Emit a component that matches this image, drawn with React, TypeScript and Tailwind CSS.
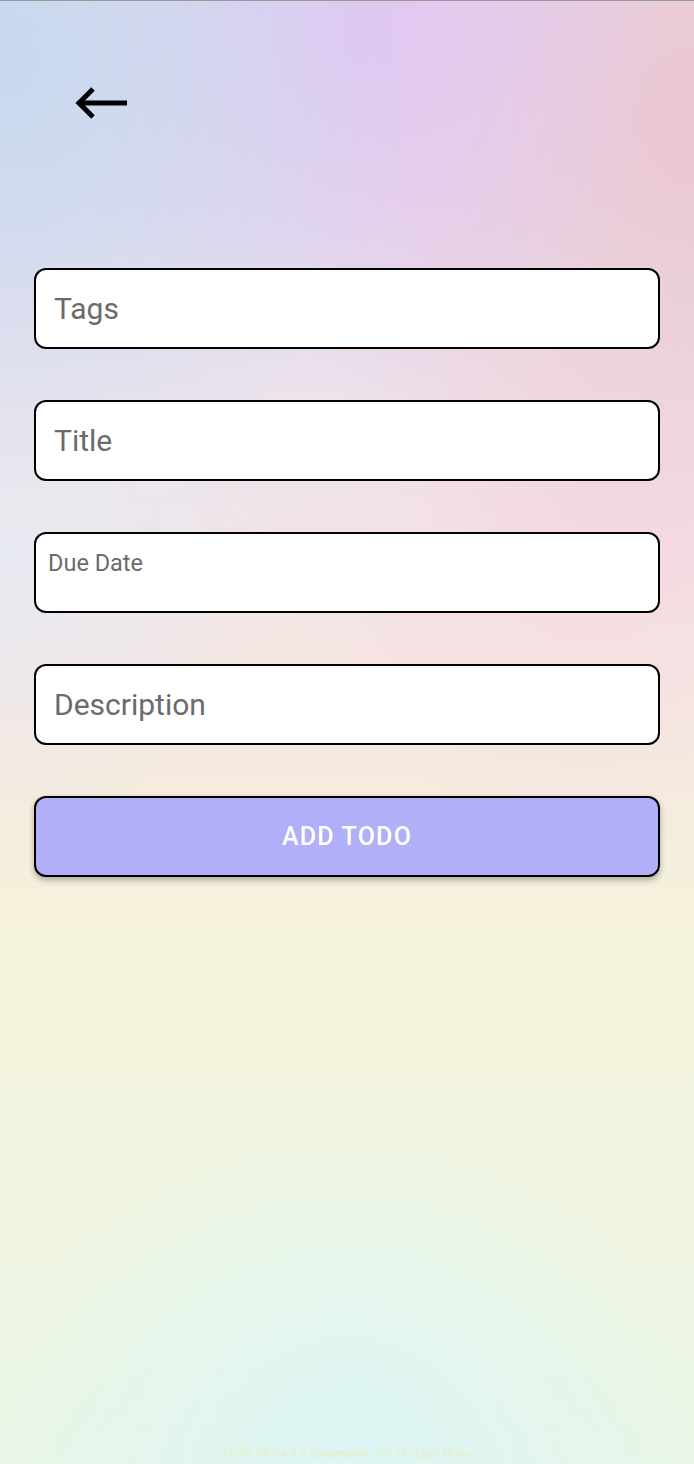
import React from "react";

const fields = ["Tags", "Title"];

function BackArrow() {
  return (
    <svg width="54" height="34" viewBox="0 0 54 34" fill="none" stroke="black" strokeWidth="5">
      <path d="M4 17 H53" />
      <path d="M19 3 L5 17 L19 31" strokeLinejoin="miter" />
    </svg>
  );
}

const App = () => {
  return (
    <div
      className="relative flex min-h-screen h-[1464px] w-full flex-col border-t border-[#9a9a9a] font-['Roboto',_'Noto_Sans',_sans-serif] bg-[radial-gradient(ellipse_60%_30%_at_0%_4%,#c6d8ef_0%,transparent_100%),radial-gradient(ellipse_45%_25%_at_52%_2%,#e1c6f2_0%,transparent_100%),radial-gradient(ellipse_60%_35%_at_100%_8%,#ebc6d0_0%,transparent_100%),radial-gradient(ellipse_45%_18%_at_85%_38%,#f5dce2_0%,transparent_100%),radial-gradient(ellipse_40%_18%_at_0%_38%,#e7e9f1_0%,transparent_100%),radial-gradient(ellipse_50%_25%_at_50%_100%,#ddf6f6_0%,transparent_100%),linear-gradient(to_bottom,#e2dcef_0%,#ede3ec_30%,#f5e6e2_45%,#f5f1dc_62%,#f1f4df_80%,#e8f5e6_100%)]"
    >
      <div className="pl-[74px] pt-[85px]">
        <BackArrow />
      </div>

      <div className="mt-[148px] flex flex-col gap-[51px] px-[34px]">
        {fields.map((f) => (
          <div
            key={f}
            className="flex h-[81px] items-center rounded-[12px] border-2 border-black bg-white px-[18px] text-[30px] text-[#6b6b6b]"
          >
            {f}
          </div>
        ))}
        <div className="h-[81px] rounded-[12px] border-2 border-black bg-white px-[12px] pt-[15px] text-[23.5px] leading-[28px] text-[#6b6b6b]">
          Due Date
        </div>
        <div className="flex h-[81px] items-center rounded-[12px] border-2 border-black bg-white px-[18px] text-[30px] text-[#6b6b6b]">
          Description
        </div>
        <button className="flex h-[81px] items-center justify-center rounded-[12px] border-2 border-black bg-[#b1aff8] text-[25px] font-medium tracking-[1.2px] text-white shadow-[0_3px_6px_rgba(0,0,0,0.3)]">
          ADD TODO
        </button>
      </div>

      <div className="mt-auto pb-[2px] text-center text-[11px] text-[#e6f0c2]">
        CC BY-NC-SA 4.0&nbsp;&nbsp;@heyeased&nbsp;&nbsp;&nbsp;iOS 13 · Light Mode
      </div>
    </div>
  );
};

export default App;
